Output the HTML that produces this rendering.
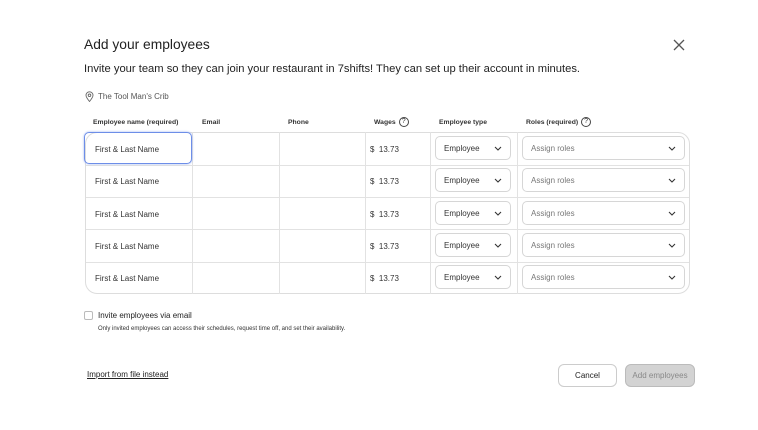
<!DOCTYPE html>
<html><head><style>
*{box-sizing:border-box;margin:0;padding:0}
body{width:758px;height:430px;background:#fff;font-family:"Liberation Sans",sans-serif;color:#222;position:relative;overflow:hidden}
.a{position:absolute;white-space:nowrap}
.h{font-size:6.8px;font-weight:bold;color:#333;top:117px;height:10px;display:flex;align-items:center}
.tbl{position:absolute;left:85px;top:132px;width:605px;height:162px;border:1px solid #ddd;border-radius:12px;overflow:hidden}
.row{position:absolute;left:0;width:605px;height:33px;border-bottom:1px solid #e2e2e2}
.sel{position:absolute;height:24px;top:4px;border:1px solid #d6d6d6;border-radius:5px;font-size:8px;color:#333;display:flex;align-items:center;padding-left:8px}
.sel svg{position:absolute;right:8px;top:9px}
.q{display:inline-block;width:10px;height:10px;border:1px solid #444;border-radius:50%;font-size:7px;text-align:center;line-height:8px;margin-left:3px;font-weight:normal}
</style></head><body>
<div class="a" style="left:84px;top:37px;font-size:13.8px;color:#222">Add your employees</div>
<svg class="a" style="left:673px;top:39px" width="12" height="12"><path d="M1 1L11 11M11 1L1 11" stroke="#555" stroke-width="1.3"/></svg>
<div class="a" style="left:84px;top:63px;font-size:11.2px;color:#222">Invite your team so they can join your restaurant in 7shifts! They can set up their account in minutes.</div>
<svg class="a" style="left:85px;top:91px" width="9" height="11" viewBox="0 0 9 11"><path d="M4.5 10.5C2 7.5 1 6 1 4.3A3.5 3.5 0 0 1 8 4.3C8 6 7 7.5 4.5 10.5Z" fill="none" stroke="#666" stroke-width="0.9"/><circle cx="4.5" cy="4.3" r="1.3" fill="none" stroke="#666" stroke-width="0.9"/></svg>
<div class="a" style="left:98px;top:92px;font-size:8px;color:#555">The Tool Man's Crib</div>
<div class="a h" style="left:93px">Employee name (required)</div>
<div class="a h" style="left:202px">Email</div>
<div class="a h" style="left:288px">Phone</div>
<div class="a h" style="left:374px">Wages<span class="q">?</span></div>
<div class="a h" style="left:439px">Employee type</div>
<div class="a h" style="left:526px">Roles (required)<span class="q">?</span></div>
<div class="tbl">
<div class="row" style="top:0"></div><div class="row" style="top:32px"></div><div class="row" style="top:64px"></div><div class="row" style="top:97px"></div><div class="row" style="top:129px;border:none"></div>
</div>
<div id="rows"></div>
<script>
var tops=[132,164,197,229,261];var h='';
tops.forEach(function(t,i){
h+='<div class="a" style="left:95px;top:'+(t+13)+'px;font-size:8px;color:#333">First &amp; Last Name</div>';
h+='<div class="a" style="left:370px;top:'+(t+13)+'px;font-size:8px;color:#333">$&nbsp;&nbsp;13.73</div>';
h+='<div class="sel" style="left:435px;width:76px;top:'+(t+4)+'px">Employee<svg width="8" height="5"><path d="M1 1L4 4L7 1" fill="none" stroke="#333" stroke-width="1.1"/></svg></div>';
h+='<div class="sel" style="left:522px;width:163px;top:'+(t+4)+'px;color:#777">Assign roles<svg width="8" height="5"><path d="M1 1L4 4L7 1" fill="none" stroke="#333" stroke-width="1.1"/></svg></div>';
});
[192,279,365,430,517].forEach(function(x){h+='<div class="a" style="left:'+x+'px;top:132px;width:1px;height:162px;background:#e2e2e2"></div>';});
h+='<div class="a" style="left:84px;top:132px;width:108px;height:32px;border:1.5px solid #6d8ee8;border-radius:5px;box-shadow:0 0 2px #9db3f0"></div>';
document.getElementById('rows').innerHTML=h;
</script>
<div class="a" style="left:84px;top:311px;width:9px;height:9px;border:1px solid #bbb;border-radius:2px"></div>
<div class="a" style="left:98px;top:311px;font-size:8px;color:#222">Invite employees via email</div>
<div class="a" style="left:98px;top:326px;font-size:6px;color:#333">Only invited employees can access their schedules, request time off, and set their availability.</div>
<div class="a" style="left:87px;top:370px;font-size:8px;color:#222;text-decoration:underline">Import from file instead</div>
<div class="a" style="left:558px;top:364px;width:59px;height:23px;border:1px solid #ccc;border-radius:6px;font-size:8px;color:#222;display:flex;align-items:center;justify-content:center">Cancel</div>
<div class="a" style="left:625px;top:364px;width:70px;height:23px;background:#d3d3d3;border:1px solid #bbb;border-radius:6px;font-size:8px;color:#888;display:flex;align-items:center;justify-content:center">Add employees</div>
</body></html>
